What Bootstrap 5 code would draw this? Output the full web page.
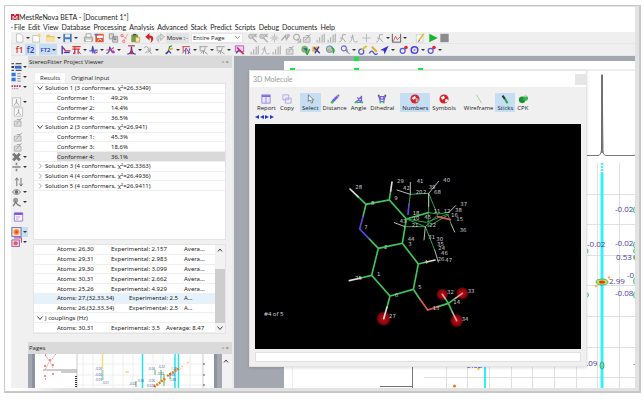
<!DOCTYPE html>
<html lang="en">
<head>
<meta charset="utf-8">
<meta name="viewport" content="width=device-width, initial-scale=1">
<title>MestReNova BETA - [Document 1*]</title>
<link href="https://cdn.jsdelivr.net/npm/bootstrap@5.3.0/dist/css/bootstrap.min.css" rel="stylesheet">
<style>
body{font:6px/10px "Open Sans","Noto Sans",sans-serif;color:#222;background:#fff;padding:5px 2px 9px 4px}
button{border:0;background:none;padding:0;color:inherit;font:inherit}
.title-row,.menu-row,.dlg-title{font-family:Lato,"Open Sans",sans-serif;font-size:7px}
.frame{border:1px solid #c8c8c8;border-right-width:2px;border-bottom-width:2px;padding:1px 4px 3px 6px;background:linear-gradient(90deg,#fff 14px,#e2e2e2 60px)}
.bar{height:12px;background:#efefef;padding-left:3px;border-bottom:1px solid #e6e6e6}
.title-row{height:15px;padding-top:4px}
.menu-row{height:10px;padding-left:0}
.menu-row a{color:#222;text-decoration:none;margin-right:3px}
.menu-row::before{content:"·";width:3px}
.tb{width:11px;height:11px;display:flex;align-items:center;flex:none}
.tb svg{width:11px;height:10px;flex:none}
.tb.drop{width:17px}
.tb.drop::after{content:"";border:2px solid transparent;border-top-color:#333;border-bottom:0;margin-left:1px}
.tb.on,.mt.on{background:#c5def3}
.tb.g2{margin-left:2px}.tb.g3{margin-left:3px}.tb.g4{margin-left:4px}.tb.g7{margin-left:7px}
.tb.glyph{justify-content:center;font-size:8px;font-weight:600}
.tb.wide{width:18px;font-size:6px}
.glyph.r{color:#c22}.glyph.b{color:#33b}
.move-btn{width:23px;height:10px;background:#e3e3e3}
.page-size{width:52px;height:10px;min-height:0;font-size:6px;line-height:8px;padding:0 8px 0 1px;margin:0 0 0 2px;border:1px solid #e6e6e6;border-radius:0;background-size:5px 5px;background-position:right 2px center;color:#222}
.side{width:17px;background:#f0f0f0;padding-top:6px}
.side .tb{height:10px;width:17px}
.side .tb:not(.drop){padding-left:2px}
.side .tb.sp{margin-top:5px}
.dock{width:204px;background:#f0f0f0}
.head{height:12px;background:#dadada;padding:0 3px 0 1px}
.pins{color:#666}
.tabs{padding:4px 6px 0;height:15px}
.tabs button{height:11px;padding:0 5px}
.tabs .sel{background:#fff;border:1px solid #eee;border-bottom:0}
.tree{margin:0 6px 0 5px;background:#fff;border:1px solid #e4e4e4}
.rows{margin:0;padding:0;list-style:none;font-family:"Noto Sans","Open Sans",sans-serif}
.rows.up{height:107px}.rows.low{height:88px}
.rows li{display:flex;flex:1 1 0;align-items:center;border-bottom:1px solid #efefef;padding-left:11px;white-space:nowrap;position:relative;min-height:0}
.rows li.kid{padding-left:23px}
.rows li.cur::before{content:"";position:absolute;inset:0 0 0 23px;background:#d9d9d9}
.rows li.hov{background:#e5f2fc}
.rows li span{position:relative}
.rows .tw{position:absolute;left:3px;width:6px;height:6px;display:flex}
.c1{width:54px}.c2{width:73px}.c1.long{width:72px}.c2.long{width:55px}.c2.mid{width:55px}
.sbar{width:10px;background:#f2f2f2;padding:2px 0}
.sbar svg{width:8px;height:6px}
.thumb{width:3px;background:#cdcdcd;margin-top:16px;margin-bottom:2px}
.pages{background:#f0f0f0}
.space{background:#a3a8b0;min-width:0;border-left:2px solid #ececec}
.dialog3d{left:15px;top:14px;width:338px;background:#f0f0f0;border:1px solid #e4e4e4;box-shadow:0 1px 3px #0002}
.dlg-title{height:16px;background:#fff;padding-left:3px;color:#999}
.dlg-close{width:11px;height:11px;background:#e6e6e6}
.mtools{padding:6px 5px 0;height:25px}
.mt{height:19px;display:flex;flex-direction:column;align-items:center;justify-content:space-between;padding:1px 2px 0;line-height:8px;flex:none}
.mt svg{width:10px;height:10px}
.canvas3d{background:#000;margin:0 5px;display:block;width:auto}
.status3d{margin:3px 5px 4px;height:10px;border:1px solid #e0e0e0;background:#fff;padding:0;width:calc(100% - 10px);display:block}
.nav3d{height:12px;padding:2px 5px;gap:1px}
.nav3d button{width:4px;height:6px;display:flex}
</style>
<script src="https://cdn.jsdelivr.net/npm/bootstrap@5.3.0/dist/js/bootstrap.bundle.min.js"></script>
</head>
<body class="vh-100 d-flex flex-column overflow-hidden">
<svg class="d-none">
<symbol id="new" viewBox="0 0 12 12"><path d="M2.500 1h5l2.500 2.500V11H2.500z" fill="#fff" stroke="#bbb"/></symbol>
<symbol id="newstar" viewBox="0 0 12 12"><path d="M1.500 3h6l2 2v6h-8z" fill="#fff" stroke="#bbb"/><circle cx="9" cy="3" r="2" fill="#f6d568"/></symbol>
<symbol id="folder" viewBox="0 0 12 12"><path d="M1 2h4l1 1.500h5V10H1z" fill="#e9c964"/><path d="M1 10l1-5h10l-1 5z" fill="#f8e2a0"/></symbol>
<symbol id="save" viewBox="0 0 12 12"><path d="M1 1h10v10H1z" fill="#4878b8"/><path d="M3 1.500h6v3.500H3zM3 7.500h6V11H3z" fill="#e4edf7"/></symbol>
<symbol id="print" viewBox="0 0 12 12"><path d="M3 5V1h6v4" fill="#fff" stroke="#999"/><path d="M1 5h10v5H1z" fill="#ccc" stroke="#888" stroke-width=".8"/><path d="M3 8h6v2H3z" fill="#fff"/></symbol>
<symbol id="pdf" viewBox="0 0 12 12"><path d="M1 1h10v10H1z" fill="#e65330"/><path d="M3 3h7v3H3z" fill="#fff"/><path d="M4 10l2-3 3 2" stroke="#fff" fill="none"/><path d="M0 1h4v2H0z" fill="#4a76c0"/></symbol>
<symbol id="copy" viewBox="0 0 12 12"><path d="M1 1h5v6H1zM5 4h6v7H5z" fill="#ddd" stroke="#8b8b8b"/><path d="M6.500 6h3M6.500 8h3" stroke="#555"/></symbol>
<symbol id="cut" viewBox="0 0 12 12"><path d="M2 3l7 4M10 1L5 10" stroke="#f09a9a"/><circle cx="3" cy="3" r="1.500" fill="none" stroke="#e66"/><circle cx="5" cy="10" r="1.500" fill="none" stroke="#e66"/></symbol>
<symbol id="paste" viewBox="0 0 12 12"><path d="M1 2h8v9H1z" fill="#7b9a45"/><path d="M3 1h4v2H3z" fill="#555"/><path d="M6 5h5v6H6z" fill="#f5e6a0" stroke="#9a8b50" stroke-width=".7"/></symbol>
<symbol id="undo" viewBox="0 0 12 12"><path d="M1 4.500L6 0v3c6 0 6 6 1 9 2-4 1-6-1-6v3z" fill="#c92828"/></symbol>
<symbol id="redo" viewBox="0 0 12 12"><path d="M11 4.500L6 1v2c-5 0-6 5-2 8-1-4 0-5 2-5v3z" fill="#d6d6d6" stroke="#999" stroke-width=".6"/></symbol>
<symbol id="zin" viewBox="0 0 12 12"><circle cx="4" cy="4" r="2.700" fill="#ccc" stroke="#aaa"/><path d="M6 6l5 5M7 1l4 4M11 1L7 5" stroke="#aaa" stroke-width="1.500"/></symbol>
<symbol id="pan" viewBox="0 0 12 12"><path d="M6 1v10M1 6h10M3 3l6 6M9 3L3 9" stroke="#b2b2b2"/><circle cx="6" cy="6" r="2.500" fill="#ccc"/></symbol>
<symbol id="zsel" viewBox="0 0 12 12"><path d="M1 9l5-6 1 5 4-6" fill="none" stroke="#aaa" stroke-width="1.500"/><circle cx="9" cy="3" r="2" fill="#bbb"/></symbol>
<symbol id="loop" viewBox="0 0 12 12"><circle cx="6" cy="5" r="3.500" fill="#eee" stroke="#aaa" stroke-width="1.300"/><path d="M7 7l4 4M11 7v4H7" stroke="#999" fill="none"/></symbol>
<symbol id="bars" viewBox="0 0 12 12"><path d="M2 11V8M5 11V5M8 11V2M10.500 11V1" stroke="#aaa" stroke-width="1.300"/><path d="M1 11h10" stroke="#ccc"/></symbol>
<symbol id="spk" viewBox="0 0 12 12"><path d="M1 11q3 0 4-9 1 9 3 9l3-1M2 5h3" fill="none" stroke="#aaa"/></symbol>
<symbol id="run" viewBox="0 0 12 12"><path d="M2 11q4-1 4-9h4M6 6l4 5M3 6h3" fill="none" stroke="#aaa" stroke-width="1.200"/></symbol>
<symbol id="cross" viewBox="0 0 12 12"><path d="M6 1v10M1 6h10" stroke="#bbb" stroke-width="1.200"/></symbol>
<symbol id="chart" viewBox="0 0 12 12"><path d="M1 1v10h10V1" fill="none" stroke="#444"/><path d="M2 10l3-6 2 4 4-4" fill="none" stroke="#c44"/></symbol>
<symbol id="note" viewBox="0 0 12 12"><path d="M1 2h8v9H1z" fill="#fafafa" stroke="#ccc"/><path d="M4 9l6-8" stroke="#eab82c" stroke-width="2"/><path d="M3 10l2-1" stroke="#444"/></symbol>
<symbol id="play" viewBox="0 0 12 12"><path d="M1 1l10 5-10 5z" fill="#14b52c"/></symbol>
<symbol id="stop" viewBox="0 0 12 12"><path d="M1 1h10v10H1z" fill="#8c8c8c"/></symbol>
<symbol id="apod" viewBox="0 0 12 12"><path d="M2 1v10" stroke="#33c" stroke-width="1.600"/><path d="M3 3l3 4h6" stroke="#c2255c" stroke-width="1.600" fill="none"/><path d="M4 9h7" stroke="#33c" stroke-width="1.500"/></symbol>
<symbol id="ftr" viewBox="0 0 12 12"><path d="M1 2h10M1 5h9M4 2v9M8 5v6" stroke="#d33" stroke-width="1.500"/><path d="M2 11l2-4M9 8l2 3" stroke="#44c"/></symbol>
<symbol id="phase" viewBox="0 0 12 12"><path d="M1 7h3l1-5 2 8 1-4h3" stroke="#55d" stroke-width="1.500" fill="none"/><path d="M5 1v9" stroke="#33a"/><path d="M8 10l3-2" stroke="#d44" stroke-width="1.500"/></symbol>
<symbol id="base" viewBox="0 0 12 12"><path d="M1 10q4 0 4-8 2 8 6 7" fill="none" stroke="#44c" stroke-width="1.500"/><path d="M1 6h5l4-3" stroke="#d44" stroke-width="1.300" fill="none"/><circle cx="9" cy="8" r="1.800" fill="#b3c"/></symbol>
<symbol id="peak" viewBox="0 0 12 12"><path d="M2 1h8" stroke="#c33" stroke-width="1.500"/><path d="M1 11q5 0 5-9 0 9 5 9" fill="none" stroke="#33c" stroke-width="1.500"/><path d="M4 11l2-7 2 7z" fill="#c33"/></symbol>
<symbol id="gpeak" viewBox="0 0 12 12"><path d="M1 3q3-3 5 1t-1 5M5 5l5 6M2 10l3-3M8 3v5" fill="none" stroke="#a5a5a5" stroke-width="1.200"/></symbol>
<symbol id="integ" viewBox="0 0 12 12"><path d="M1 10q4 0 5-8l3-1" fill="none" stroke="#3a8f3a" stroke-width="1.500"/><path d="M2 11l3-4 3 3" stroke="#33c" fill="none" stroke-width="1.500"/><path d="M5 6l5-2" stroke="#e0b030" stroke-width="2"/></symbol>
<symbol id="mult" viewBox="0 0 12 12"><path d="M1 2h9M2 2v6M1 10l5-6 2 4 3 2" fill="none" stroke="#c44" stroke-width="1.200"/><path d="M5 11V4M8 11l2-7" stroke="#55d" stroke-width="1.300"/></symbol>
<symbol id="gm" viewBox="0 0 12 12"><path d="M1 2h10M2 2v5h4v4M8 3l-1 5 4 3M3 10l3-4" fill="none" stroke="#a2a2a2" stroke-width="1.200"/></symbol>
<symbol id="purp" viewBox="0 0 12 12"><path d="M1 1h10v7H1z" fill="#f0d0ee" stroke="#a050b0"/><path d="M3 3l4 4 4 4" stroke="#d02b65" stroke-width="2"/><path d="M2 10l3-4" stroke="#44c" stroke-width="1.500"/></symbol>
<symbol id="green" viewBox="0 0 12 12"><circle cx="5" cy="5" r="4" fill="#7eb46d"/><path d="M3 4h5v4z" fill="#2b5f9e"/><path d="M6 8l2 3 3-6" stroke="#3a3" stroke-width="2" fill="none"/></symbol>
<symbol id="mix" viewBox="0 0 12 12"><path d="M1 2h7v6H1z" fill="#e9a93c"/><path d="M3 3l7 7M9 2L4 10" stroke="#3c3c96" stroke-width="1.600"/></symbol>
<symbol id="globe" viewBox="0 0 12 12"><circle cx="5" cy="5" r="4" fill="#a9cbe4" stroke="#5781a9"/><path d="M7 3q5 2 2 7" stroke="#3a3" stroke-width="2" fill="none"/><path d="M2 6h4" stroke="#e8a030" stroke-width="2"/></symbol>
<symbol id="mol" viewBox="0 0 12 12"><circle cx="4" cy="4" r="3" fill="#eef" stroke="#66d" stroke-width="1.300"/><path d="M6 6l5 5M8 5v4" stroke="#779" stroke-width="1.200"/></symbol>
<symbol id="molp" viewBox="0 0 12 12"><circle cx="4.500" cy="8" r="3" fill="#eef" stroke="#55d" stroke-width="1.500"/><path d="M5 6l6-5" stroke="#e5bb20" stroke-width="2.200"/></symbol>
<symbol id="brush" viewBox="0 0 12 12"><path d="M4 2l6 6" stroke="#d9b22b" stroke-width="2.500"/><path d="M1 10q3-5 5-1t5 1" stroke="#44c" stroke-width="1.500" fill="none"/></symbol>
<symbol id="arrow" viewBox="0 0 12 12"><path d="M11 1L1 6l4 1 1 4z" fill="#3a2ed0"/></symbol>
<symbol id="molr" viewBox="0 0 12 12"><circle cx="5" cy="7" r="3" fill="#eef" stroke="#55d" stroke-width="1.500"/><circle cx="9" cy="3" r="2.200" fill="#e23"/></symbol>
<symbol id="molb" viewBox="0 0 12 12"><circle cx="6" cy="6" r="4" fill="#e8e6ff" stroke="#4a40d8" stroke-width="1.700"/><circle cx="6" cy="6" r="1.300" fill="#88e"/></symbol>
<symbol id="list" viewBox="0 0 12 12"><path d="M0 2h3M5 2h7M0 10h3M5 10h7" stroke="#555" stroke-width="1.500"/><path d="M4 4.500h8V8H4z" fill="#2b6fd0"/><path d="M0 6h3" stroke="#111" stroke-width="2"/></symbol>
<symbol id="blist" viewBox="0 0 12 12"><path d="M0 1h5v4H0zM0 7h5v4H0z" fill="#2f79dd"/><path d="M7 2h4M7 5h4M7 8h4M7 11h4" stroke="#777"/></symbol>
<symbol id="dots" viewBox="0 0 12 12"><path d="M0 5h12" stroke="#c35" stroke-width="2" stroke-dasharray="2 1"/><path d="M1 8h8" stroke="#55b" stroke-dasharray="1 1"/></symbol>
<symbol id="box" viewBox="0 0 12 12"><path d="M1 1h10v10H1z" fill="#f8f8f8" stroke="#bbb"/><path d="M3 9q3 0 3-6 0 6 3 6" fill="none" stroke="#999"/></symbol>
<symbol id="gbox" viewBox="0 0 12 12"><path d="M1 5h8v6H1z" fill="#ddd" stroke="#aaa"/><path d="M3 9l7-8M4 3h4" stroke="#aaa" stroke-width="1.200"/></symbol>
<symbol id="gx" viewBox="0 0 12 12"><path d="M2 2l8 8M10 2l-8 8" stroke="#777" stroke-width="3.500"/></symbol>
<symbol id="gdiv" viewBox="0 0 12 12"><path d="M1 6h10M6 1v3M6 8v3" stroke="#888" stroke-width="2"/></symbol>
<symbol id="ud" viewBox="0 0 12 12"><path d="M4 11V2M2 4l2-3 2 3M9 1v9M7 8l2 3 2-3" fill="none" stroke="#777" stroke-width="1.200"/></symbol>
<symbol id="eye" viewBox="0 0 12 12"><path d="M1 6q5-6 10 0-5 6-10 0z" fill="#ddd" stroke="#777"/><circle cx="6" cy="6" r="2" fill="#666"/></symbol>
<symbol id="gman" viewBox="0 0 12 12"><circle cx="5" cy="4" r="3" fill="#999"/><path d="M2 11l3-5 2 3 4 2" stroke="#777" fill="none" stroke-width="1.500"/></symbol>
<symbol id="win" viewBox="0 0 12 12"><path d="M1 1h10v10H1z" fill="#f3f0ff" stroke="#8a70d8"/><path d="M1 1h10v2.500H1z" fill="#7a55d8"/><path d="M3 6h5M3 8.500h3" stroke="#c9a"/></symbol>
<symbol id="sun" viewBox="0 0 12 12"><path d="M.5.500h11v11H.5z" fill="#fbe3c4" stroke="#5558d8"/><circle cx="6" cy="6" r="3.600" fill="#f49a3c"/><circle cx="6" cy="6" r="1.800" fill="#e3443a"/></symbol>
<symbol id="sun2" viewBox="0 0 12 12"><path d="M.5 3.500h9v8h-9z" fill="#f6d0e0" stroke="#7a48d0"/><circle cx="5" cy="7.500" r="2.500" fill="#ef5a3c"/><path d="M3 1h9v6" stroke="#d04a8a" fill="none" stroke-width="1.500"/></symbol>
<symbol id="down" viewBox="0 0 12 12"><path d="M1 3l5 6 5-6" fill="none" stroke="#444" stroke-width="2"/></symbol>
<symbol id="right" viewBox="0 0 12 12"><path d="M4 1l5 5-5 5" fill="none" stroke="#999" stroke-width="1.800"/></symbol>
<symbol id="up" viewBox="0 0 12 12"><path d="M2 9l4-5 4 5" fill="none" stroke="#444" stroke-width="2"/></symbol>
</svg>

<div class="frame flex-fill d-flex flex-column overflow-hidden">
<header class="bg-white">
 <div class="title-row d-flex align-items-center"><svg width="8" height="8" viewBox="0 0 8 8"><path d="M0 1h3l1 2 1-2h3v6H0z" fill="#c9203a"/><path d="M2 7V3l2 3 2-3v4" stroke="#fff" fill="none" stroke-width=".8"/></svg><span>MestReNova BETA - [Document 1*]</span></div>
 <nav class="menu-row d-flex align-items-center" aria-label="Main menu"><a href="#">File</a><a href="#">Edit</a><a href="#">View</a><a href="#">Database</a><a href="#">Processing</a><a href="#">Analysis</a><a href="#">Advanced</a><a href="#">Stack</a><a href="#">Predict</a><a href="#">Scripts</a><a href="#">Debug</a><a href="#">Documents</a><a href="#">Help</a></nav>
</header>
<div class="bar d-flex align-items-center">
 <div class="d-flex" data-icons="new* newstar folder*3 save* print:4 pdf copy:3 cut paste undo:3 redo"></div>
 <button class="move-btn ms-0">Move :··</button>
 <select class="form-select page-size" aria-label="Zoom"><option>Entire Page</option></select>
 <div class="d-flex" data-icons="zin:4 zin pan zsel loop gbox bars:2 bars run spk cross:2 run*2 chart* note:7 play:2 stop"></div>
</div>
<div class="bar d-flex align-items-center">
 <button class="tb glyph r">f1</button><button class="tb glyph b on">f2</button><button class="tb glyph b on drop wide g3">FT2</button>
 <div class="d-flex" data-icons="apod:3 ftr* phase* base* peak*4 gpeak* integ*4 mult* gm* gm* purp:2 bars:4 spk bars gbox:3 green:4 mix globe:3 mol*4 molp brush arrow* molr:2 molb* molr*"></div>
</div>

<main class="d-flex flex-fill overflow-hidden">
 <div class="side flex-shrink-0" data-icons="list* blist* dots* box*6 box gbox gbox:3 gbox gx* gdiv* ud:3 eye* gman* win:3 sun*6! sun2*"></div>
 <aside class="dock flex-shrink-0 d-flex flex-column">
  <div class="head d-flex align-items-center justify-content-between"><span>StereoFitter Project Viewer</span><span class="pins">▫ ×</span></div>
  <div class="tabs d-flex" role="tablist"><button class="sel" role="tab">Results</button><button role="tab">Original Input</button></div>
  <section class="tree flex-fill">
   <ul class="rows up d-flex flex-column">
    <li><button class="tw" aria-label="Collapse"><svg width="6" height="6"><use href="#down"/></svg></button>Solution 1 (3 conformers, χ²=26.3349)</li>
    <li class="kid"><span class="c1">Conformer 1:</span><span>49.2%</span></li>
    <li class="kid"><span class="c1">Conformer 2:</span><span>14.4%</span></li>
    <li class="kid"><span class="c1">Conformer 4:</span><span>36.5%</span></li>
    <li><button class="tw" aria-label="Collapse"><svg width="6" height="6"><use href="#down"/></svg></button>Solution 2 (3 conformers, χ²=26.941)</li>
    <li class="kid"><span class="c1">Conformer 1:</span><span>45.3%</span></li>
    <li class="kid"><span class="c1">Conformer 3:</span><span>18.6%</span></li>
    <li class="kid cur"><span class="c1">Conformer 4:</span><span>36.1%</span></li>
    <li><button class="tw" aria-label="Expand"><svg width="6" height="6"><use href="#right"/></svg></button>Solution 3 (4 conformers, χ²=26.3363)</li>
    <li><button class="tw" aria-label="Expand"><svg width="6" height="6"><use href="#right"/></svg></button>Solution 4 (4 conformers, χ²=26.4936)</li>
    <li><button class="tw" aria-label="Expand"><svg width="6" height="6"><use href="#right"/></svg></button>Solution 5 (4 conformers, χ²=26.9411)</li>
   </ul>
  </section>
  <section class="tree mt-1 d-flex">
   <ul class="rows low flex-fill d-flex flex-column">
    <li class="kid"><span class="c1">Atoms: 26,30</span><span class="c2">Experimental: 2.157</span><span>Avera…</span></li>
    <li class="kid"><span class="c1">Atoms: 29,31</span><span class="c2">Experimental: 2.983</span><span>Avera…</span></li>
    <li class="kid"><span class="c1">Atoms: 29,30</span><span class="c2">Experimental: 3.099</span><span>Avera…</span></li>
    <li class="kid"><span class="c1">Atoms: 30,31</span><span class="c2">Experimental: 2.662</span><span>Avera…</span></li>
    <li class="kid"><span class="c1">Atoms: 25,26</span><span class="c2">Experimental: 4.929</span><span>Avera…</span></li>
    <li class="kid hov"><span class="c1 long">Atoms: 27,(32,33,34)</span><span class="c2 long">Experimental: 2.5</span><span>A…</span></li>
    <li class="kid"><span class="c1 long">Atoms: 26,(32,33,34)</span><span class="c2 long">Experimental: 2.5</span><span>A…</span></li>
    <li><button class="tw" aria-label="Collapse"><svg width="6" height="6"><use href="#down"/></svg></button>J couplings (Hz)</li>
    <li class="kid"><span class="c1">Atoms: 30,31</span><span class="c2 mid">Experimental: 3.5</span><span>Average: 8.47</span></li>
   </ul>
   <div class="sbar d-flex flex-column align-items-center"><svg><use href="#up"/></svg><div class="thumb w-100 flex-fill"></div><svg><use href="#down"/></svg></div>
  </section>
  <div class="head d-flex align-items-center justify-content-between mt-2"><span>Pages</span><span class="pins">▫ ×</span></div>
  <div class="pages d-flex">
   <svg class="flex-fill" height="34" viewBox="28 354 194 34" preserveAspectRatio="xMinYMin slice" font-size="3" fill="#4a4a9c">
    <path d="M28 354h194v34H28z" fill="#a3a8b0"/><path d="M32 354h3v34h-3zM214 354h3v34h-3z" fill="#8b93a3"/><path d="M35 354h179v34H35z" fill="#fff"/>
    <path d="M83 354v34M93 354v34M113 354v34M123 354v34M133 354v34M153 354v34M163 354v34M190 354v34M77 364h126M77 375h126M77 385h126" stroke="#eee"/>
    <path d="M77 354v34M203 354v34" stroke="#ccc"/><path d="M43 370h34M61 372h16" stroke="#999"/>
    <path d="M45 355l5 7 5-7M49 362l-4 8M50 362l3 6" stroke="#eaa" fill="none" stroke-width=".8"/>
    <path d="M45 355h1M55 354h1M49 360h2M44 366h2M52 365h2M44 376h2M52 374h2M45 379h1" stroke="#e66" stroke-width="1.500"/>
    <path d="M76 376v12" stroke="#333" stroke-width="2" stroke-dasharray="1 1"/>
    <path d="M102.500 354v15" stroke="#f3dc6a" stroke-width="1.500"/><path d="M102.500 370v10M136 381v6M155 370v5M161 370v12M164 374v12M170 373v6" stroke="#9cdcae" stroke-width="2"/>
    <path d="M142.500 354v34M175 354v34M178.500 354v34" stroke="#26e4ee" stroke-width="1.500"/>
    <path d="M125 372h4M181 367l2-1M187 363l2-1" stroke="#f2cf45" stroke-width="1.200"/><path d="M154 387l12-9M167 376l13-8" stroke="#ec7a1e" stroke-width="2.500" stroke-dasharray="2 1"/>
    <text x="95" y="370">-0.06</text><text x="95" y="376">-0.66</text><text x="95" y="381">-0.03</text><text x="102" y="384">-0.01</text><text x="129" y="385">-0.02</text><text x="138" y="382">0.38</text><text x="148" y="370">-0.04</text><text x="158" y="368">-0.22</text><text x="157" y="375">-0.02</text><text x="148" y="382">-0.06</text><text x="147" y="387">0.023</text><text x="171" y="370">1.28</text><text x="168" y="376">-0.08</text><text x="169" y="381">-0.88</text>
    <path d="M203 364h2M203 375h2M203 385h2" stroke="#555"/>
   </svg>
   <div class="sbar"><svg><use href="#up"/></svg></div>
  </div>
 </aside>

 <section class="space flex-fill position-relative overflow-hidden">
  <svg class="w-100 h-100 d-block" font-size="8" fill="#4a3aa8" font-family="Open Sans">
   <g transform="translate(-234 -55)">
    <path d="M284 60h800v800H284z" fill="#fff"/><path d="M292 69h800" stroke="#ddd"/><path d="M292.500 366v30" stroke="#eee"/>
    <path d="M586 154.500h12q3 0 3.500-6l.5-75 1 75q0 6 3 6h28q2 0 2-3" fill="none" stroke="#777"/><path d="M602 74v78" stroke="#666" stroke-width="1.500"/>
    <path d="M446.500 366v30M467.500 366v30M489.500 366v30M511.500 366v30M532.500 366v30M554.500 366v30M576.500 366v30M597.500 162v240M619.500 162v240M586 193.500h60M586 223.500h60M586 254.500h60M586 284.500h60M586 315.500h60M586 346.500h60M424 376.500h222" stroke="#e0e0e0"/>
    <path d="M412.500 366v30M380 385.500h33" stroke="#777"/>
    <path d="M602 162v10" stroke="#4df0f0" stroke-width="2.500" stroke-dasharray="2 1"/><path d="M602 172v220" stroke="#35f0f5" stroke-width="3"/><path d="M485 366v30" stroke="#2ff0f5" stroke-width="2"/>
    <ellipse cx="602" cy="281" rx="6" ry="3" fill="#c9e54a" stroke="#3fb37a"/><ellipse cx="602" cy="281" rx="3" ry="1.500" fill="#e6351f"/><circle cx="596" cy="285" r="1.200" fill="#f2b52c"/><circle cx="609" cy="276.500" r="1.200" fill="#f2b52c"/>
    <ellipse cx="602" cy="364.500" rx="2" ry="3.500" fill="#5fe0a0" stroke="#3a9"/><circle cx="454.500" cy="385" r="1.500" fill="#ee7420"/><circle cx="478.500" cy="368" r="1.200" fill="#f0cf3c"/>
    <g fill="#bff0cc" stroke="#5c9"><ellipse cx="635" cy="209" rx="1.500" ry="3"/><ellipse cx="635" cy="244" rx="1.500" ry="3"/><ellipse cx="635" cy="250" rx="1.500" ry="2"/><ellipse cx="635" cy="256.500" rx="1.500" ry="2" fill="#f08030"/><ellipse cx="635" cy="280" rx="1.500" ry="3"/><ellipse cx="635" cy="294" rx="1.500" ry="3"/><ellipse cx="587" cy="250" rx="1" ry="2"/><ellipse cx="587" cy="294" rx="1.500" ry="2"/></g>
    <text x="615" y="211">-0.02</text><text x="587" y="246">-0.02</text><text x="615" y="245">-0.02</text><text x="616" y="259">0.53</text><text x="627" y="277">-0</text><text x="609" y="283">2.99</text><text x="615" y="295">-0.08</text><text x="579" y="365">-0.09</text><text x="633" y="365">-</text><text x="464" y="367">-0.02</text>
    <g fill="#15e83c"><path d="M354 56h5v4h-5zM290 67h5v4h-5zM354 67h5v4h-5zM418 67h5v4h-5z"/></g>
   </g>
  </svg>
  <div class="dialog3d position-absolute">
   <div class="dlg-title d-flex align-items-center justify-content-between"><span>3D Molecule</span><button class="dlg-close" aria-label="Close"></button></div>
   <div class="mtools d-flex">
    <button class="mt"><svg viewBox="0 0 12 12"><path d="M1 1h10v10H1z" fill="#e8e6fb" stroke="#8a7fe0"/><path d="M1 2.500h10" stroke="#7060e0" stroke-width="2"/><path d="M6 3v8" stroke="#8a7fe0"/></svg>Report</button>
    <button class="mt"><svg viewBox="0 0 12 12"><path d="M1 1h7v6H1zM4 5h7v6H4z" fill="#efedfb" stroke="#a79fe4"/></svg>Copy</button>
    <button class="mt on ms-1"><svg viewBox="0 0 12 12"><path d="M4 1v8l2-2 2 4 1.500-1L8 7h2.500z" fill="#fff" stroke="#555" stroke-width=".8"/></svg>Select</button>
    <button class="mt"><svg viewBox="0 0 12 12"><path d="M3 9l6-6" stroke="#7a60e8" stroke-width="3"/><circle cx="2.500" cy="10" r="1.600" fill="#1d4"/><circle cx="10" cy="2" r="1.300" fill="#777"/></svg>Distance</button>
    <button class="mt"><svg viewBox="0 0 12 12"><path d="M9 2v8H2L9 3M4 4l4 5" fill="none" stroke="#7a60e8" stroke-width="1.500"/><path d="M1 9h3v2H1zM8 9h3v2H8z" fill="#1d4"/></svg>Angle</button>
    <button class="mt"><svg viewBox="0 0 12 12"><path d="M2 2l2 7h4l2-7M4 3h4v3H4z" fill="none" stroke="#7a60e8" stroke-width="1.500"/><path d="M3 9h2v2H3zM7 9h2v2H7z" fill="#1d4"/><path d="M1 1h2v2H1zM9 1h2v2H9z" fill="#555"/></svg>Dihedral</button>
    <button class="mt on ms-1"><svg viewBox="0 0 12 12"><circle cx="6" cy="6" r="5.500" fill="#d8232a"/><path d="M2 5l4-3 1 3-3 2zM7 5l3 1v4H7z" fill="#fff"/><path d="M8.500 6v4" stroke="#333"/></svg>Numbers</button>
    <button class="mt"><svg viewBox="0 0 12 12"><circle cx="6" cy="6" r="5.500" fill="#d8232a"/><path d="M2 4l4-2 1 3-3 2zM8 6l3 1-1 3H7z" fill="#fff"/></svg>Symbols</button>
    <button class="mt ms-1"><svg viewBox="0 0 12 12"><path d="M3 1l6 10" stroke="#7ddb7a"/></svg>Wireframe</button>
    <button class="mt on"><svg viewBox="0 0 12 12"><path d="M3 2l3 4" stroke="#333" stroke-width="2.500"/><path d="M6 6l3 5" stroke="#2ba33b" stroke-width="2.500"/></svg>Sticks</button>
    <button class="mt"><svg viewBox="0 0 12 12"><circle cx="5" cy="7" r="4" fill="#1e8f35"/><circle cx="9" cy="5" r="3" fill="#2fb548"/><circle cx="9" cy="2.500" r="1.500" fill="#ccc"/></svg>CPK</button>
   </div>
   <div class="nav3d d-flex">
    <button aria-label="First"><svg width="4" height="6"><path d="M4 1v4L0 3z" fill="#2a35d0"/></svg></button><button aria-label="Previous"><svg width="4" height="6"><path d="M4 1v4L0 3z" fill="#2a35d0"/></svg></button><button aria-label="Next"><svg width="4" height="6"><path d="M0 1v4l4-2z" fill="#2a35d0"/></svg></button><button aria-label="Last"><svg width="4" height="6"><path d="M0 1v4l4-2z" fill="#2a35d0"/></svg></button>
   </div>
   <svg class="canvas3d" viewBox="-228 -108 978 675" font-size="16" font-family="DejaVu Sans" fill="#c9c9c9">
    <defs><radialGradient id="ball"><stop offset="0" stop-color="#c01018"/><stop offset=".7" stop-color="#8c060c"/><stop offset="1" stop-color="#4a0204"/></radialGradient></defs>
    <g fill="url(#ball)"><circle cx="158" cy="476" r="21"/><circle cx="334" cy="403" r="17"/><circle cx="394" cy="400" r="18"/><circle cx="377" cy="482" r="19"/></g>
    <g fill="none" stroke-width="5" stroke-linecap="round" stroke="#3fc45c">
     <path d="M96 170l9-37 70-13 51 57-12 73-72 15-20 81 55 62 70-20 15-76-48-62M142 265l-28-29M105 133L81 110M175 120l4-27M122 346l-33 8M177 408l-9 34M247 388l20 30M262 312l25-6M352 430l-31 10M352 430l-9-14M352 430l21-15M352 430l12 26M226 177l66-19"/>
     <path d="M96 170l-10 37 28 29M234 133l-3 30" stroke="#5a48d8"/>
     <path d="M81 110L57 87M179 93l4-27M89 354l-34 8M168 442l-10 34M287 306l25-6" stroke="#ddd"/>
     <path d="M343 416l-9-13M373 415l21-15M364 456l13 26" stroke="#f09a9a"/>
     <path d="M267 418l23 32 31-10" stroke="#e05858"/>
     <path d="M234 133l4-30 55-3 27 65-37 35h-61M292 158l-1 42 60-35M293 100v58l28 4 33-5M283 200l-57-23M222 200l4-23M283 200l28 70M226 177l60 10 64-25 11 32" stroke-width="3" stroke="#2fa34c"/>
     <path d="M238 103V67M238 103l-40-13M293 100l30-36M293 100v40M222 200l-32-12M283 200l-4 40M311 270l11 36M354 157l20-20M361 194l10 22" stroke-width="3" stroke="#bbb"/>
     <path d="M320 170l38 9" stroke="#e05858"/>
    </g>
    <g><text x="73" y="87">28</text><text x="198" y="68">29</text><text x="257" y="68">41</text><text x="337" y="65">40</text><text x="216" y="90">42</text><text x="254" y="103">20</text><text x="276" y="103">2</text><text x="293" y="88">39</text><text x="309" y="102">68</text><text x="388" y="137">37</text><text x="372" y="155">38</text><text x="376" y="184">15</text><text x="360" y="171">16</text><text x="386" y="216">36</text><text x="338" y="160">12</text><text x="308" y="160">11</text><text x="245" y="164">18</text><text x="245" y="180">10</text><text x="280" y="178">45</text><text x="206" y="188">43</text><text x="242" y="202">21</text><text x="295" y="201">22</text><text x="292" y="236">31</text><text x="316" y="243">30</text><text x="318" y="257">35</text><text x="322" y="271">24</text><text x="330" y="285">46</text><text x="320" y="302">26</text><text x="343" y="307">47</text><text x="230" y="242">44</text><text x="100" y="208">7</text><text x="120" y="134">8</text><text x="190" y="121">9</text><text x="159" y="266">2</text><text x="232" y="259">3</text><text x="280" y="312">4</text><text x="138" y="347">1</text><text x="72" y="361">25</text><text x="191" y="410">6</text><text x="262" y="388">5</text><text x="174" y="475">27</text><text x="305" y="449">13</text><text x="367" y="432">14</text><text x="348" y="402">32</text><text x="410" y="400">33</text><text x="392" y="482">34</text>
    <text x="-201" y="467" fill="#ddd" font-size="18" font-family="Open Sans">#4 of 5</text></g>
   </svg>
   <input class="status3d" aria-label="Status">
  </div>
 </section>
</main>
</div>
<script>
// Icon strips: name, "*" = drop-down arrow, digit = space before, "!" = active.
document.querySelectorAll('[data-icons]').forEach(function (box) {
  var side = box.classList.contains('side');
  box.dataset.icons.split(' ').forEach(function (item) {
    var m = item.match(/^([a-z]+\d?)([*:]?)(\d?)(!?)$/), b = document.createElement('button');
    b.className = 'tb' + (m[2] === '*' ? ' drop' : '') + (m[3] ? (side ? ' sp' : ' g' + m[3]) : '') + (m[4] ? ' on' : '');
    b.setAttribute('aria-label', m[1]);
    b.innerHTML = '<svg><use href="#' + m[1] + '"/></svg>';
    box.appendChild(b);
  });
});
</script>
</body>
</html>
